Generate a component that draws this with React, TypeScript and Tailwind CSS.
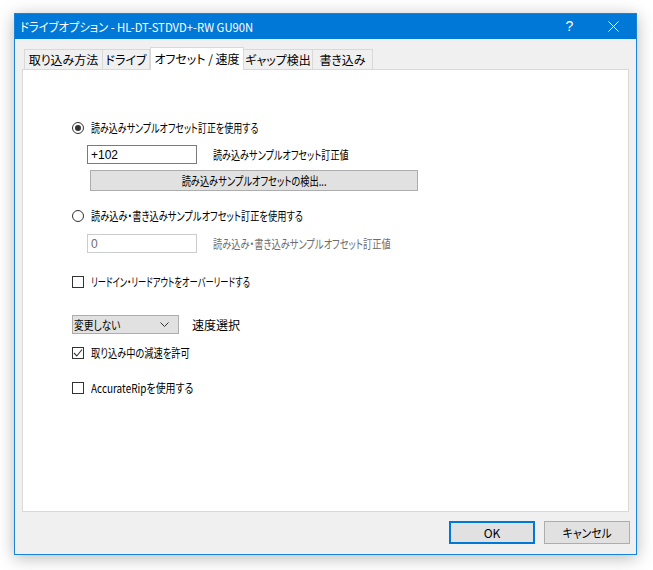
import React from "react";

const jp = "font-['Noto_Sans_CJK_JP','Noto_Sans',sans-serif] [font-feature-settings:'palt']";

function Radio({ checked }: { checked?: boolean }) {
  return (
    <span className="w-[12px] h-[12px] rounded-full border border-[#333333] bg-white flex items-center justify-center shrink-0">
      {checked && <span className="w-[6px] h-[6px] rounded-full bg-[#333333]" />}
    </span>
  );
}

function Check({ checked }: { checked?: boolean }) {
  return (
    <span className="w-[12px] h-[12px] border border-[#333333] bg-white flex items-center justify-center shrink-0">
      {checked && (
        <svg width="10" height="10" viewBox="0 0 10 10">
          <polyline points="1,5 3.8,8 9,1.5" fill="none" stroke="#333333" strokeWidth="1.1" />
        </svg>
      )}
    </span>
  );
}

function Tab({ label, w, selected }: { label: string; w: string; selected?: boolean }) {
  if (selected) {
    return (
      <div className={`${w} h-[23px] -mb-px bg-white border border-b-0 border-[#d9d9d9] flex items-start justify-center pt-[2px] text-[12px] text-black z-10`}>
        {label}
      </div>
    );
  }
  return (
    <div className={`${w} h-[20px] bg-[#f0f0f0] border border-b-0 border-[#d9d9d9] -ml-px first:ml-0 flex items-center justify-center text-[12px] text-black`}>
      {label}
    </div>
  );
}

export default function App() {
  return (
    <div className={`w-[653px] h-[570px] bg-white pl-[14px] pt-[13px] ${jp}`}>
      <div className="w-[623px] h-[542px] border border-[#1883d7] bg-[#f0f0f0] flex flex-col shadow-[0_3px_16px_rgba(0,0,0,0.28)]">
        {/* title bar */}
        <div className="h-[25px] bg-[#0078d7] flex items-center text-white shrink-0">
          <div className="pl-[5px] text-[12px] flex-1 leading-none">
            <span className="inline-block origin-left scale-x-[0.94]">ドライブオプション - HL-DT-STDVD+-RW GU90N</span>
          </div>
          <div className="w-[45px] h-full flex items-center justify-center text-[14px] font-['Liberation_Sans',sans-serif] pl-[2px]">?</div>
          <div className="w-[45px] h-full flex items-center justify-center">
            <svg width="11" height="11" viewBox="0 0 11 11">
              <line x1="0.5" y1="0.5" x2="10.5" y2="10.5" stroke="white" strokeWidth="1" />
              <line x1="10.5" y1="0.5" x2="0.5" y2="10.5" stroke="white" strokeWidth="1" />
            </svg>
          </div>
        </div>
        {/* body */}
        <div className="flex-1 pl-[7px] pt-[8px] flex flex-col">
          <div className="h-[22px] flex items-end pl-[2px]">
            <Tab label="取り込み方法" w="w-[79px]" />
            <Tab label="ドライブ" w="w-[48px]" />
            <Tab label="オフセット / 速度" w="w-[94px]" selected />
            <Tab label="ギャップ検出" w="w-[70px]" />
            <Tab label="書き込み" w="w-[61px]" />
          </div>
          <div className="w-[607px] h-[443px] bg-white border border-[#d9d9d9] flex flex-col pl-[49px] text-[12px] text-black">
            <div className="mt-[51px] h-[14px] flex items-center gap-[7px]">
              <Radio checked />
              <span className="inline-block origin-left scale-x-[0.75] whitespace-nowrap">読み込みサンプルオフセット訂正を使用する</span>
            </div>
            <div className="mt-[10px] h-[19px] flex items-center ml-[15px]">
              <div className="w-[110px] h-[19px] border border-[#7a7a7a] bg-white flex items-center pl-[3px] font-['Liberation_Sans',sans-serif] text-[12px]">+102</div>
              <span className="ml-[16px] inline-block origin-left scale-x-[0.76] whitespace-nowrap">読み込みサンプルオフセット訂正値</span>
            </div>
            <div className="mt-[6px] ml-[18px] w-[328px] h-[21px] bg-[#e1e1e1] border border-[#adadad] flex items-center justify-center">
              <span className="inline-block origin-center scale-x-[0.77] whitespace-nowrap">読み込みサンプルオフセットの検出...</span>
            </div>
            <div className="mt-[18px] h-[14px] flex items-center gap-[7px]">
              <Radio />
              <span className="inline-block origin-left scale-x-[0.77] whitespace-nowrap">読み込み・書き込みサンプルオフセット訂正を使用する</span>
            </div>
            <div className="mt-[11px] h-[19px] flex items-center ml-[15px]">
              <div className="w-[110px] h-[19px] border border-[#cccccc] bg-white flex items-center pl-[3px] text-[#6d6d6d] font-['Liberation_Sans',sans-serif] text-[12px]">0</div>
              <span className="ml-[16px] text-[#6d6d6d] inline-block origin-left scale-x-[0.77] whitespace-nowrap">読み込み・書き込みサンプルオフセット訂正値</span>
            </div>
            <div className="mt-[22px] h-[14px] flex items-center gap-[7px]">
              <Check />
              <span className="inline-block origin-left scale-x-[0.69] whitespace-nowrap">リードイン・リードアウトをオーバーリードする</span>
            </div>
            <div className="mt-[26px] h-[19px] flex items-center">
              <div className="w-[107px] h-[19px] bg-[#e1e1e1] border border-[#adadad] flex items-center justify-between pl-[1px] pr-[9px]">
                <span className="inline-block origin-left scale-x-[0.81] whitespace-nowrap">変更しない</span>
                <svg width="9" height="5" viewBox="0 0 9 5">
                  <polyline points="0.5,0.5 4.5,4.5 8.5,0.5" fill="none" stroke="#333333" strokeWidth="1" />
                </svg>
              </div>
              <span className="ml-[13px]">速度選択</span>
            </div>
            <div className="mt-[12px] h-[14px] flex items-center gap-[7px]">
              <Check checked />
              <span className="inline-block origin-left scale-x-[0.77] whitespace-nowrap">取り込み中の減速を許可</span>
            </div>
            <div className="mt-[21px] h-[14px] flex items-center gap-[7px]">
              <Check />
              <span className="inline-block origin-left scale-x-[0.83] whitespace-nowrap">AccurateRipを使用する</span>
            </div>
          </div>
          <div className="flex justify-end gap-[9px] pr-[6px] mt-[9px]">
            <div className="w-[86px] h-[23px] border-2 border-[#0078d7] bg-[#e1e1e1] flex items-center justify-center text-[12px]">OK</div>
            <div className="w-[86px] h-[23px] border border-[#adadad] bg-[#e1e1e1] flex items-center justify-center text-[12px]">
              <span className="inline-block origin-center scale-x-[0.9] whitespace-nowrap">キャンセル</span>
            </div>
          </div>
        </div>
      </div>
    </div>
  );
}
